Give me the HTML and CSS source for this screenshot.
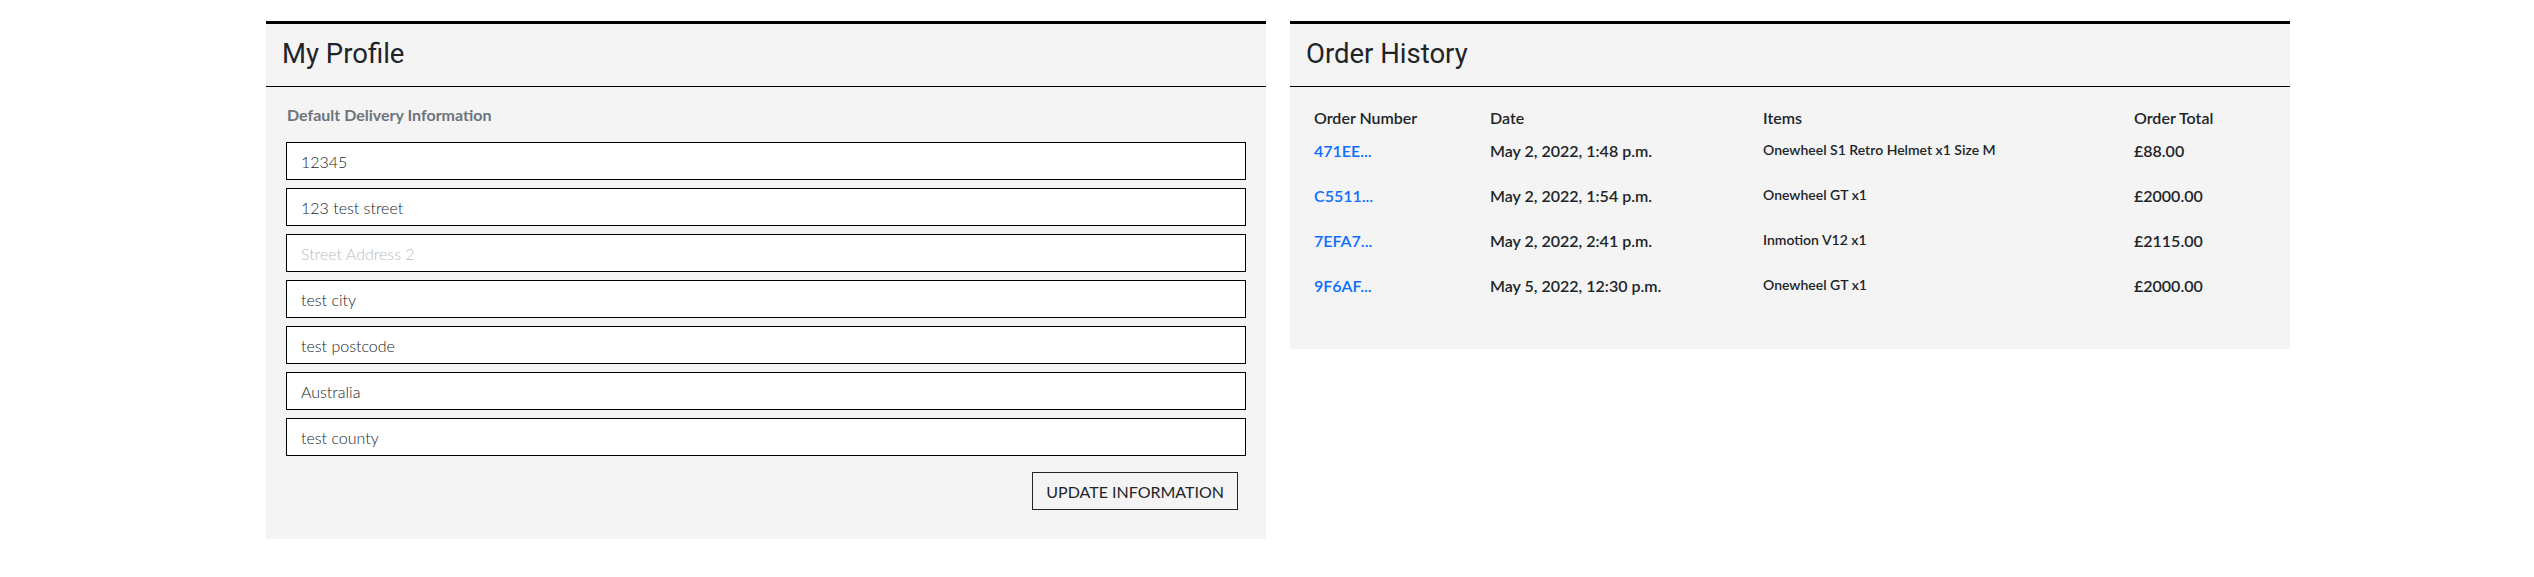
FILE: index.html
```html
<!DOCTYPE html>
<html lang="en">
<head>
<meta charset="utf-8">
<title>Account</title>
<link rel="stylesheet" href="styles.css">
</head>
<body>
<main class="page">
  <section class="panel profile">
    <header class="panel-head"><h2 class="panel-title">My Profile</h2></header>
    <div class="panel-body">
      <h3 class="section-label">Default Delivery Information</h3>
      <form class="profile-form">
        <input class="field" type="text" value="12345">
        <input class="field" type="text" value="123 test street">
        <input class="field" type="text" placeholder="Street Address 2">
        <input class="field" type="text" value="test city">
        <input class="field" type="text" value="test postcode">
        <input class="field" type="text" value="Australia">
        <input class="field" type="text" value="test county">
        <div class="form-actions">
          <button class="btn" type="button">Update Information</button>
        </div>
      </form>
    </div>
  </section>
  <section class="panel orders">
    <header class="panel-head"><h2 class="panel-title">Order History</h2></header>
    <div class="panel-body orders-body">
      <div class="order-grid">
        <div class="th">Order Number</div>
        <div class="th">Date</div>
        <div class="th">Items</div>
        <div class="th">Order Total</div>

        <div class="td"><a class="order-link" href="#">471EE...</a></div>
        <div class="td date">May 2, 2022, 1:48 p.m.</div>
        <div class="td items">Onewheel S1 Retro Helmet x1 Size M</div>
        <div class="td total">£88.00</div>

        <div class="td"><a class="order-link" href="#">C5511...</a></div>
        <div class="td date">May 2, 2022, 1:54 p.m.</div>
        <div class="td items">Onewheel GT x1</div>
        <div class="td total">£2000.00</div>

        <div class="td"><a class="order-link" href="#">7EFA7...</a></div>
        <div class="td date">May 2, 2022, 2:41 p.m.</div>
        <div class="td items">Inmotion V12 x1</div>
        <div class="td total">£2115.00</div>

        <div class="td"><a class="order-link" href="#">9F6AF...</a></div>
        <div class="td date">May 5, 2022, 12:30 p.m.</div>
        <div class="td items">Onewheel GT x1</div>
        <div class="td total">£2000.00</div>
      </div>
    </div>
  </section>
</main>
</body>
</html>
```

FILE: styles.css
```css
* { box-sizing: border-box; }

body {
  margin: 0;
  background: #fff;
  font-family: "Lato", "Liberation Sans", sans-serif;
  color: #212529;
}

.page {
  display: flex;
  align-items: flex-start;
  gap: 24px;
  padding: 21px 0 0 266px;
}

.panel {
  width: 1000px;
  background: #f4f4f4;
  border-top: 3px solid #000;
}

.panel-head {
  border-bottom: 1px solid #000;
  padding: 12px 16px 14px;
}

.panel-title {
  margin: 0;
  font-family: "Roboto", "Liberation Sans", sans-serif;
  font-weight: 400;
  font-size: 27.5px;
  line-height: 36px;
  color: #212529;
}

.panel-body {
  padding: 18px 20px 29px;
}

.section-label {
  margin: 0 0 18px 1px;
  font-size: 16px;
  font-weight: 700;
  line-height: 19px;
  color: #6c757d;
}

.profile-form {
  display: flex;
  flex-direction: column;
  gap: 8px;
}

.field {
  display: block;
  width: 100%;
  height: 38px;
  margin: 0;
  padding: 0 14px;
  border: 1px solid #000;
  border-radius: 0;
  background: #fff;
  font-family: "Lato", "Liberation Sans", sans-serif;
  font-weight: 300;
  font-size: 16px;
  color: #212529;
  outline: none;
}

.field::placeholder {
  color: #b9bec4;
}

.form-actions {
  display: flex;
  justify-content: flex-end;
  padding: 8px 8px 0 0;
}

.btn {
  height: 38px;
  padding: 0 13px;
  border: 1px solid #212529;
  border-radius: 0;
  background: transparent;
  font-family: "Lato", "Liberation Sans", sans-serif;
  font-size: 16px;
  font-weight: 400;
  text-transform: uppercase;
  color: #212529;
}

.orders-body {
  padding: 21px 16px 28px 24px;
}

.order-grid {
  display: grid;
  grid-template-columns: 176px 273px 371px 1fr;
  grid-template-rows: 33px repeat(4, 45px);
}

.th {
  font-size: 16px;
  font-weight: 600;
  line-height: 19px;
  color: #212529;
}

.td {
  font-size: 16px;
  font-weight: 600;
  line-height: 19px;
  color: #212529;
}

.td.items {
  font-size: 14px;
  line-height: 17px;
}

.order-link {
  color: #0d6efd;
  text-decoration: none;
  font-weight: 600;
}
```
